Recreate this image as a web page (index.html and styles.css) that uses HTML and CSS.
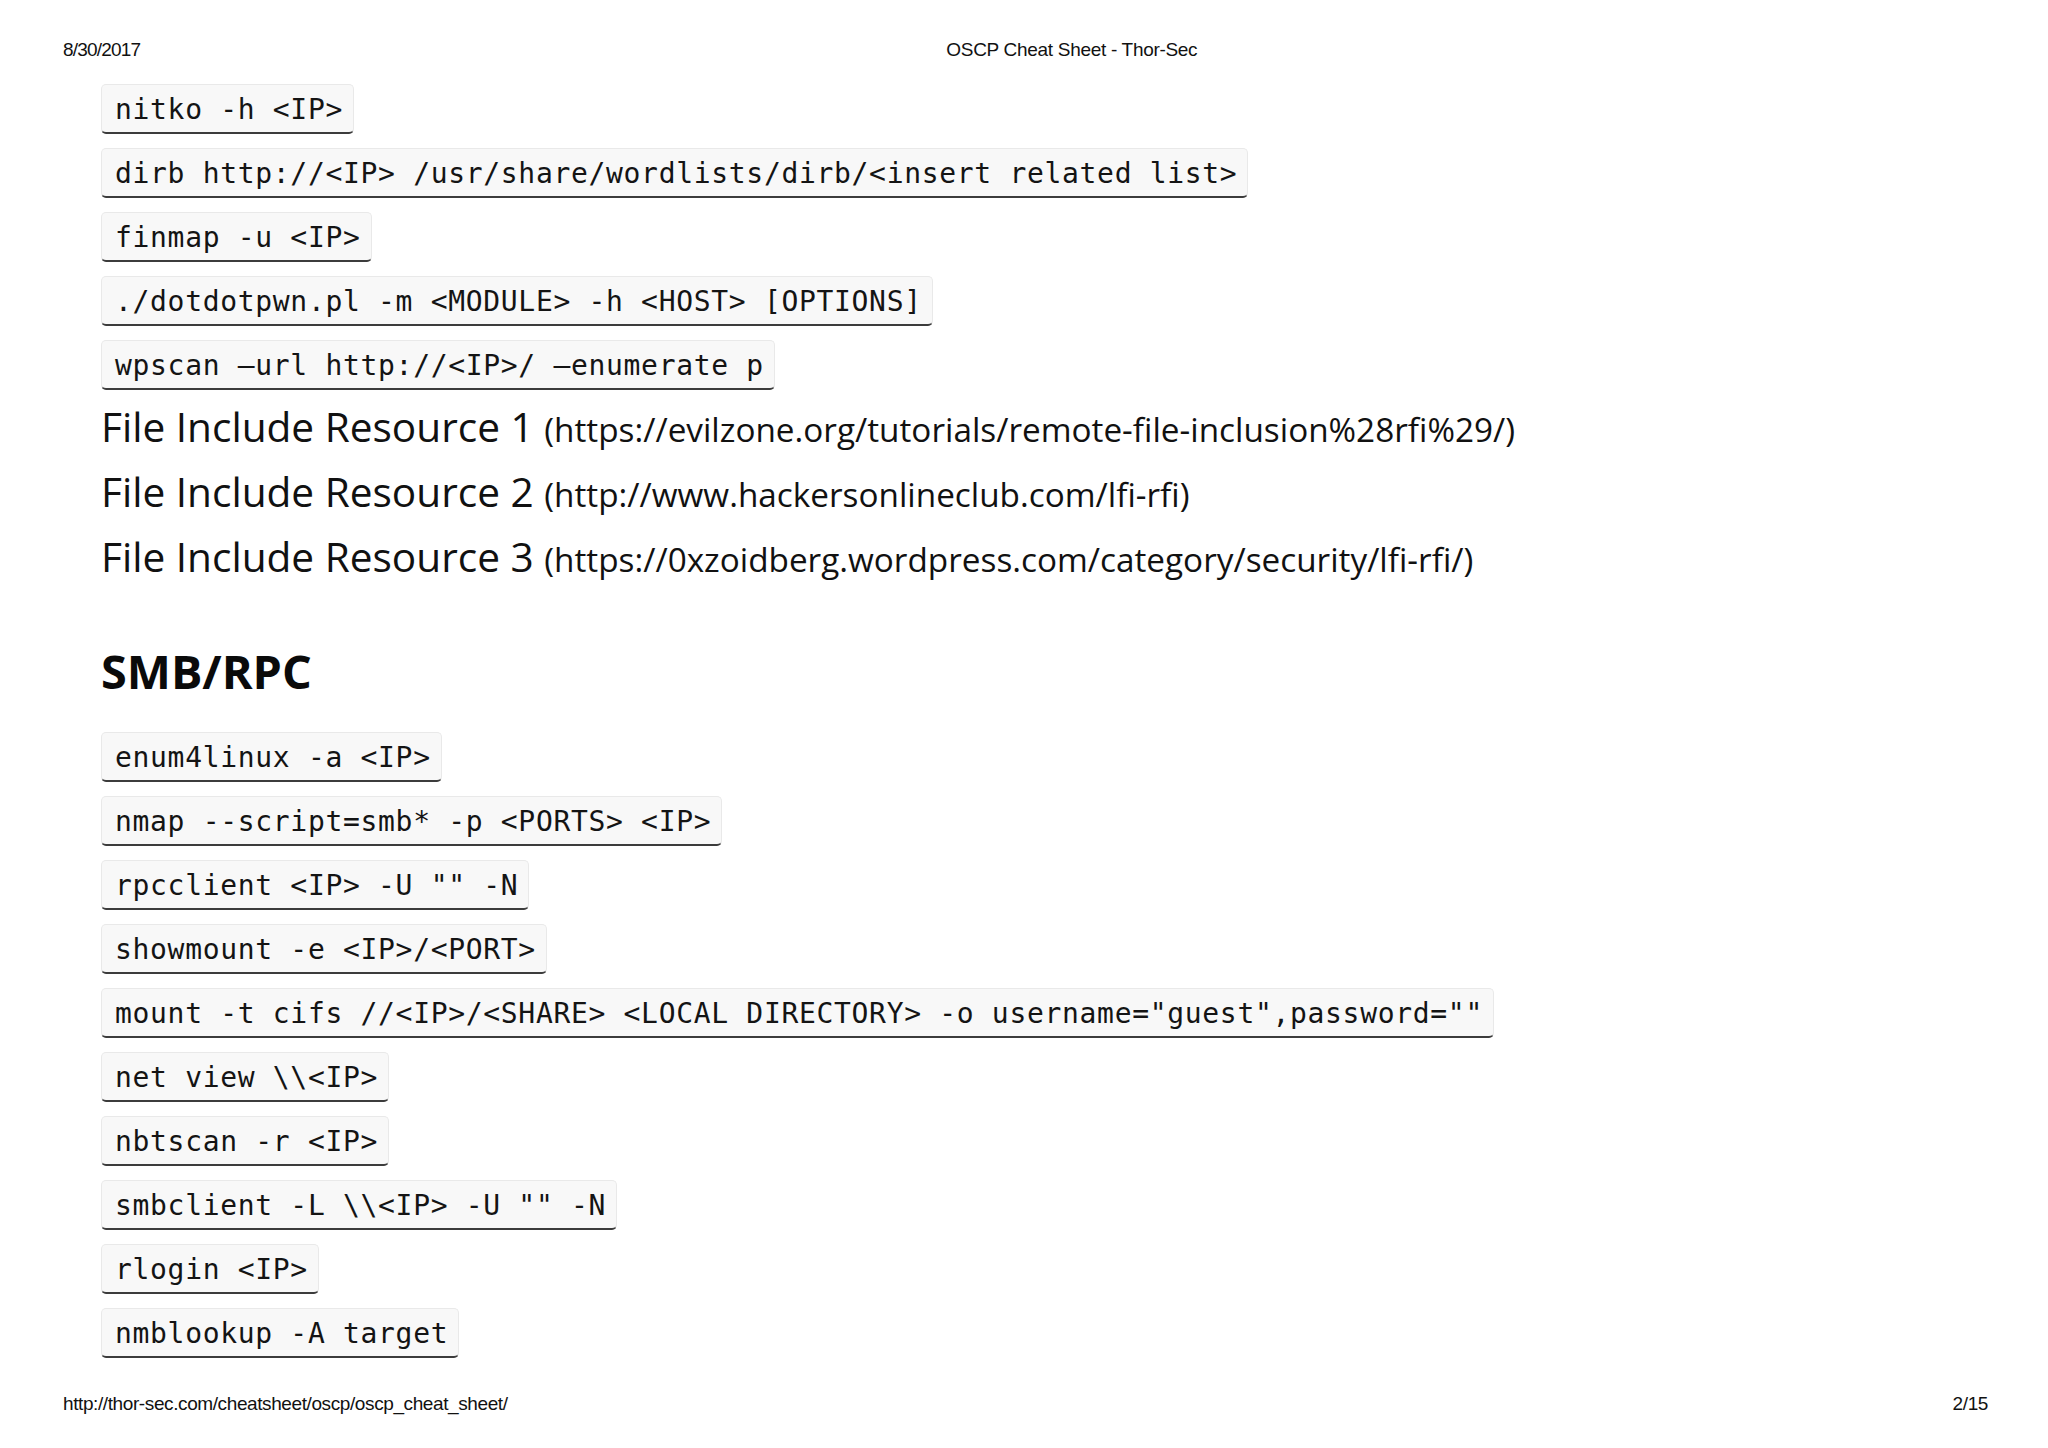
FILE: index.html
```html
<!DOCTYPE html>
<html>
<head>
<meta charset="utf-8">
<title>OSCP Cheat Sheet - Thor-Sec</title>
<link rel="stylesheet" href="styles.css">
</head>
<body>
<div class="page">
  <header class="header">
    <span class="date">8/30/2017</span>
    <span class="title">OSCP Cheat Sheet - Thor-Sec</span>
  </header>
  <main class="content">
    <div class="codes">
      <code class="cmd">nitko -h &lt;IP&gt;</code>
      <code class="cmd">dirb http://&lt;IP&gt; /usr/share/wordlists/dirb/&lt;insert related list&gt;</code>
      <code class="cmd">finmap -u &lt;IP&gt;</code>
      <code class="cmd">./dotdotpwn.pl -m &lt;MODULE&gt; -h &lt;HOST&gt; [OPTIONS]</code>
      <code class="cmd">wpscan –url http://&lt;IP&gt;/ –enumerate p</code>
    </div>
    <div class="resources">
      <p class="res">File Include Resource 1 <span class="url">(https://evilzone.org/tutorials/remote-file-inclusion%28rfi%29/)</span></p>
      <p class="res">File Include Resource 2 <span class="url">(http://www.hackersonlineclub.com/lfi-rfi)</span></p>
      <p class="res">File Include Resource 3 <span class="url">(https://0xzoidberg.wordpress.com/category/security/lfi-rfi/)</span></p>
    </div>
    <h2 class="section">SMB/RPC</h2>
    <div class="codes">
      <code class="cmd">enum4linux -a &lt;IP&gt;</code>
      <code class="cmd">nmap --script=smb* -p &lt;PORTS&gt; &lt;IP&gt;</code>
      <code class="cmd">rpcclient &lt;IP&gt; -U "" -N</code>
      <code class="cmd">showmount -e &lt;IP&gt;/&lt;PORT&gt;</code>
      <code class="cmd">mount -t cifs //&lt;IP&gt;/&lt;SHARE&gt; &lt;LOCAL DIRECTORY&gt; -o username="guest",password=""</code>
      <code class="cmd">net view \\&lt;IP&gt;</code>
      <code class="cmd">nbtscan -r &lt;IP&gt;</code>
      <code class="cmd">smbclient -L \\&lt;IP&gt; -U "" -N</code>
      <code class="cmd">rlogin &lt;IP&gt;</code>
      <code class="cmd">nmblookup -A target</code>
    </div>
  </main>
  <footer class="footer">
    <span class="link">http://thor-sec.com/cheatsheet/oscp/oscp_cheat_sheet/</span>
    <span class="pages">2/15</span>
  </footer>
</div>
</body>
</html>
```

FILE: styles.css
```css
html, body {
  margin: 0;
  padding: 0;
  background: #ffffff;
}

.page {
  width: 2048px;
  height: 1448px;
  display: flex;
  flex-direction: column;
  color: #111111;
}

.header {
  display: flex;
  align-items: baseline;
  padding: 39px 63px 0 63px;
  font-family: "Liberation Sans", Arial, sans-serif;
  font-size: 19px;
  line-height: 22px;
  color: #111;
}

.date {
  letter-spacing: -0.8px;
}

.title {
  margin-left: 806px;
  letter-spacing: -0.3px;
}

.content {
  padding: 23px 0 0 101px;
  display: flex;
  flex-direction: column;
  align-items: flex-start;
}

.codes {
  display: flex;
  flex-direction: column;
  align-items: flex-start;
  gap: 14px;
}

.cmd {
  display: block;
  box-sizing: border-box;
  height: 50px;
  padding: 3px 10px 0 13px;
  line-height: 44px;
  font-family: "DejaVu Sans Mono", monospace;
  font-size: 28px;
  letter-spacing: 0.68px;
  white-space: pre;
  color: #141414;
  background: #f8f8f8;
  border: 1px solid #e9e9e9;
  border-bottom: 2px solid #3c3c3c;
  border-radius: 5px;
}

.resources {
  margin-top: 4px;
}

.res {
  margin: 0;
  font-family: "Open Sans", "Noto Sans", sans-serif;
  font-size: 40.6px;
  line-height: 65px;
  color: #111;
  white-space: nowrap;
}

.url {
  font-size: 33.3px;
  line-height: 1;
}

.section {
  margin: 53px 0 32px 0;
  font-family: "Open Sans", "Noto Sans", sans-serif;
  font-weight: 700;
  font-size: 46.8px;
  line-height: 58px;
  color: #0a0a0a;
}

.footer {
  margin-top: auto;
  display: flex;
  justify-content: space-between;
  padding: 0 60px 33px 63px;
  font-family: "Liberation Sans", Arial, sans-serif;
  font-size: 19px;
  line-height: 22px;
  letter-spacing: -0.4px;
  color: #111;
}
```
